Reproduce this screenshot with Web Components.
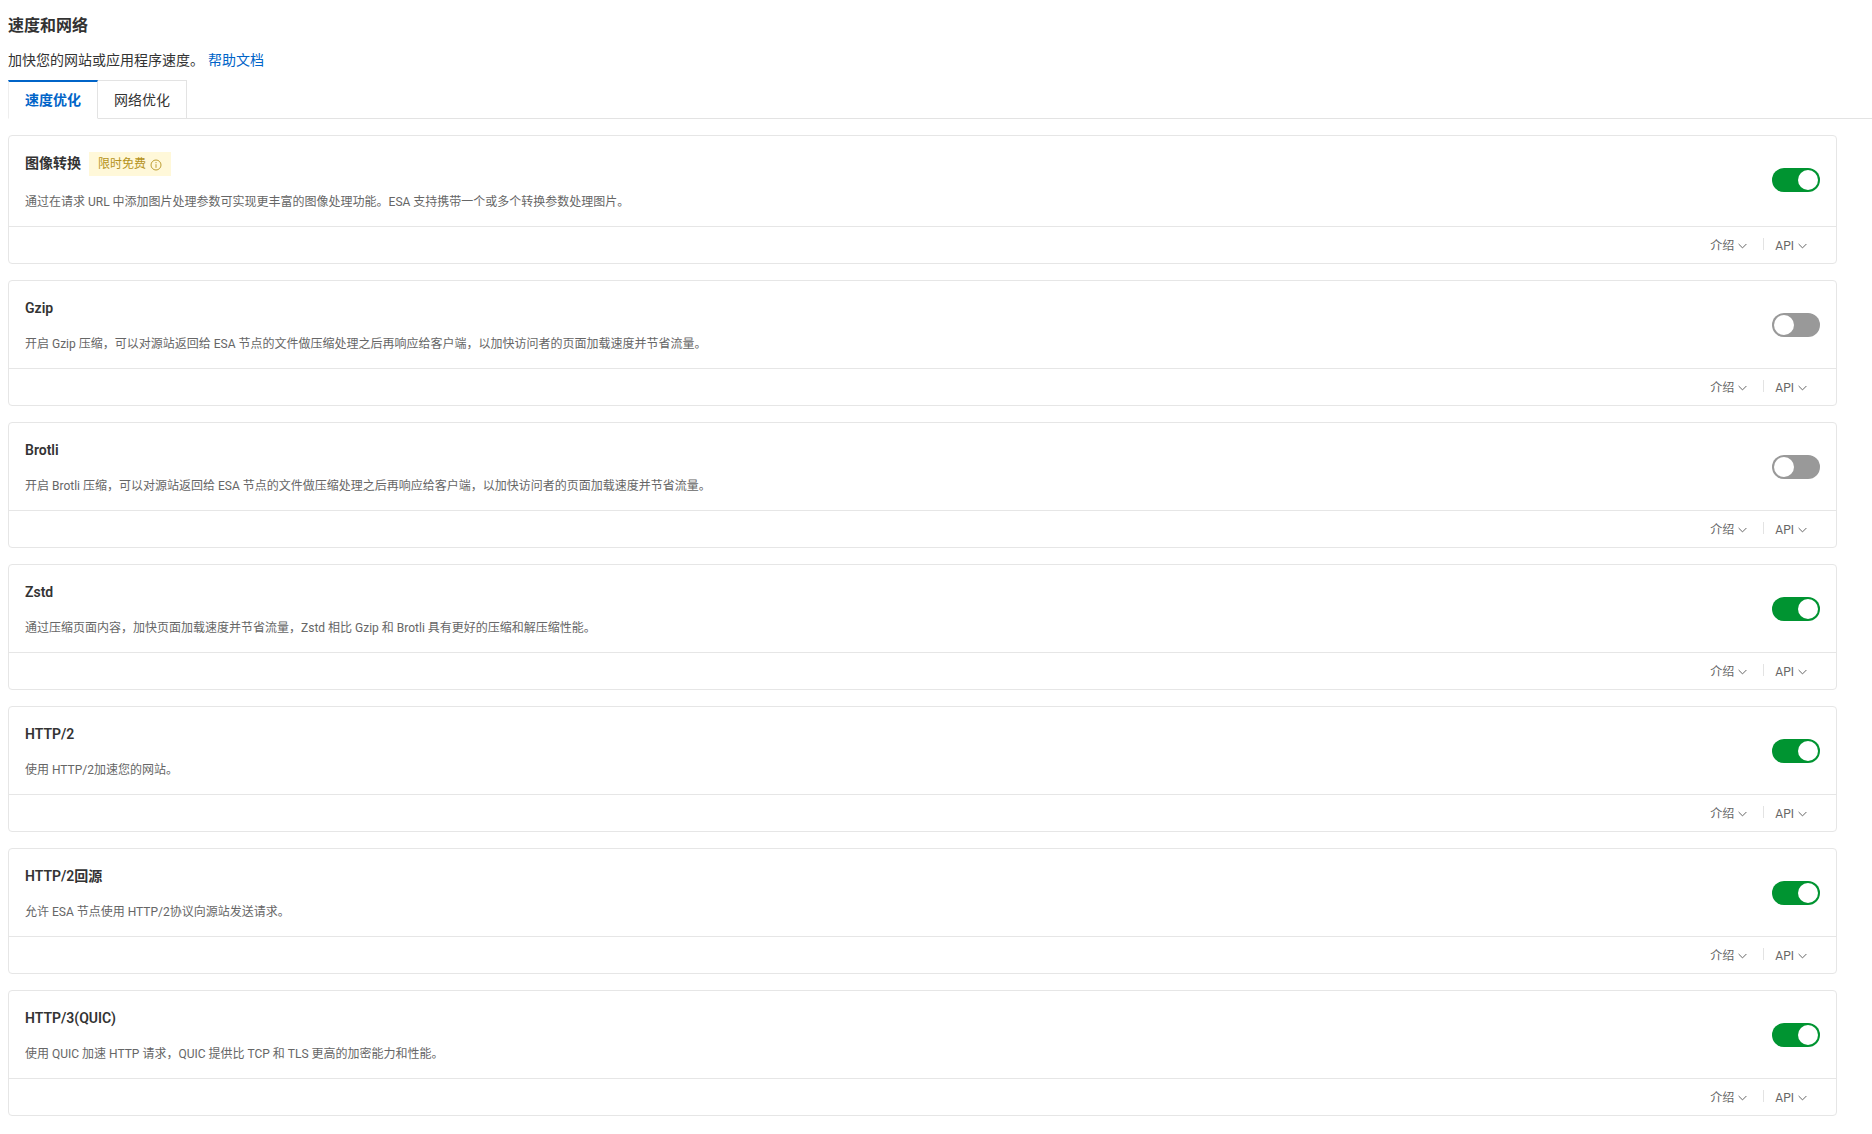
<!DOCTYPE html>
<html lang="zh">
<head>
<meta charset="utf-8">
<title>速度和网络</title>
<style>
html,body{margin:0;padding:0;background:#fff;}
body{font-family:Roboto,"Noto Sans CJK SC",sans-serif;color:#333;height:1134px;overflow:hidden;}
</style>
</head>
<body>
<speed-page>
  <page-head slot="head" title-text="速度和网络" sub="加快您的网站或应用程序速度。" link="帮助文档"></page-head>
  <tab-bar slot="tabs" active="速度优化" other="网络优化"></tab-bar>
  <feature-card name="图像转换" tag="限时免费" on desc="通过在请求 URL 中添加图片处理参数可实现更丰富的图像处理功能。ESA 支持携带一个或多个转换参数处理图片。"></feature-card>
  <feature-card name="Gzip" desc="开启 Gzip 压缩，可以对源站返回给 ESA 节点的文件做压缩处理之后再响应给客户端，以加快访问者的页面加载速度并节省流量。"></feature-card>
  <feature-card name="Brotli" desc="开启 Brotli 压缩，可以对源站返回给 ESA 节点的文件做压缩处理之后再响应给客户端，以加快访问者的页面加载速度并节省流量。"></feature-card>
  <feature-card name="Zstd" on desc="通过压缩页面内容，加快页面加载速度并节省流量，Zstd 相比 Gzip 和 Brotli 具有更好的压缩和解压缩性能。"></feature-card>
  <feature-card name="HTTP/2" on desc="使用 HTTP/2加速您的网站。"></feature-card>
  <feature-card name="HTTP/2回源" on desc="允许 ESA 节点使用 HTTP/2协议向源站发送请求。"></feature-card>
  <feature-card name="HTTP/3(QUIC)" on desc="使用 QUIC 加速 HTTP 请求，QUIC 提供比 TCP 和 TLS 更高的加密能力和性能。"></feature-card>
</speed-page>
<script>
const FONT='Roboto,"Noto Sans CJK SC",sans-serif';
const CHEV='<svg width="9" height="6" viewBox="0 0 9 6" fill="none" stroke="#666" stroke-width="1"><path d="M.6 1 4.5 4.9 8.4 1"/></svg>';
class SpeedPage extends HTMLElement{
  constructor(){super();this.attachShadow({mode:'open'}).innerHTML=`<style>
  :host{display:block;font-family:${FONT};}
  .head{padding-left:8px;padding-top:14px;}
  .list{display:flex;flex-direction:column;gap:16px;padding:16px 35px 0 8px;}
  </style><div class="head"><slot name="head"></slot></div><slot name="tabs"></slot><div class="list"><slot></slot></div>`;}
}
class PageHead extends HTMLElement{
  connectedCallback(){if(this.shadowRoot)return;const r=this.attachShadow({mode:'open'});
  r.innerHTML=`<style>
  :host{display:block;}
  h1{margin:0;font-size:16px;line-height:24px;font-weight:700;color:#333;}
  p{margin:11px 0 0;font-size:14px;line-height:22px;color:#333;}
  a{color:#0064c8;text-decoration:none;margin-left:4px;}
  </style><h1>${this.getAttribute('title-text')}</h1><p>${this.getAttribute('sub')}<a href="#">${this.getAttribute('link')}</a></p>`;}
}
class TabBar extends HTMLElement{
  connectedCallback(){if(this.shadowRoot)return;const r=this.attachShadow({mode:'open'});
  r.innerHTML=`<style>
  :host{display:block;margin-top:9px;}
  .bar{display:flex;height:39px;box-sizing:border-box;padding-left:8px;position:relative;}
  .bar::after{content:"";position:absolute;left:8px;right:0;bottom:0;height:1px;background:#e3e3e3;}
  .t{box-sizing:border-box;height:39px;padding:0 16px;font-size:14px;line-height:38px;border:1px solid #e3e3e3;border-left:0;color:#333;}
  .t.a{position:relative;z-index:1;border-top:2px solid #0064c8;border-left:1px solid #eee;border-bottom:1px solid #fff;color:#0064c8;font-weight:700;line-height:36px;}
  </style><div class="bar"><div class="t a">${this.getAttribute('active')}</div><div class="t">${this.getAttribute('other')}</div></div>`;}
}
class SwitchToggle extends HTMLElement{
  connectedCallback(){if(this.shadowRoot)return;const r=this.attachShadow({mode:'open'});
  r.innerHTML=`<style>
  :host{display:block;width:48px;height:24px;flex:none;}
  .s{box-sizing:border-box;width:48px;height:24px;border-radius:12px;padding:2px;background:#999;display:flex;justify-content:flex-start;}
  :host([on]) .s{background:#009431;justify-content:flex-end;}
  .k{width:20px;height:20px;border-radius:50%;background:#fff;}
  </style><div class="s"><div class="k"></div></div>`;}
}
class ExpandLink extends HTMLElement{
  connectedCallback(){if(this.shadowRoot)return;const r=this.attachShadow({mode:'open'});
  r.innerHTML=`<style>
  :host{display:inline-flex;align-items:center;gap:4px;font-size:12px;line-height:18px;color:#666;margin-top:2px;}
  svg{display:block;margin-top:-1px;}
  </style><span><slot></slot></span>${CHEV}`;}
}
class FeatureCard extends HTMLElement{
  connectedCallback(){if(this.shadowRoot)return;const r=this.attachShadow({mode:'open'});
  const tag=this.getAttribute('tag');
  const on=this.hasAttribute('on');
  r.innerHTML=`<style>
  :host{display:block;box-sizing:border-box;border:1px solid #e6e6e6;border-radius:4px;background:#fff;}
  .top{display:flex;align-items:flex-start;justify-content:space-between;padding:16px 16px 14px;border-bottom:1px solid #e6e6e6;}
  .title{display:flex;align-items:center;gap:8px;font-size:14px;line-height:22px;font-weight:600;color:#333;min-height:22px;}
  .title.t{margin-bottom:16px;}
  .title.t>span:first-child{margin-top:-2px;}
  .tag{display:inline-flex;align-items:center;gap:4px;height:24px;padding:0 9px;background:#fff8d9;color:#b59320;font-size:12px;font-weight:400;}
  .tag svg{margin-top:2px;}
  .desc{margin-top:15px;font-size:12px;line-height:20px;color:#666;}
  .title.t + .desc{margin-top:0;}
  switch-toggle{margin-top:16px;}
  .foot{display:flex;justify-content:flex-end;align-items:center;height:36px;padding-right:29px;}
  .sep{width:1px;height:12px;background:#e3e3e3;margin:0 11px 2px 16px;}
  </style>
  <div class="top"><div>
    <div class="title${tag?' t':''}"><span>${this.getAttribute('name')}</span>${tag?`<span class="tag">${tag}<svg width="12" height="12" viewBox="0 0 12 12" fill="none" stroke="#b59320" stroke-width=".9"><circle cx="6" cy="6" r="5"/><path d="M6 5.2v3.6M6 3v1.2"/></svg></span>`:''}</div>
    <div class="desc">${this.getAttribute('desc')}</div>
  </div><switch-toggle ${on?'on':''}></switch-toggle></div>
  <div class="foot"><expand-link>介绍</expand-link><span class="sep"></span><expand-link>API</expand-link></div>`;}
}
customElements.define('speed-page',SpeedPage);
customElements.define('page-head',PageHead);
customElements.define('tab-bar',TabBar);
customElements.define('switch-toggle',SwitchToggle);
customElements.define('expand-link',ExpandLink);
customElements.define('feature-card',FeatureCard);
</script>
</body>
</html>
